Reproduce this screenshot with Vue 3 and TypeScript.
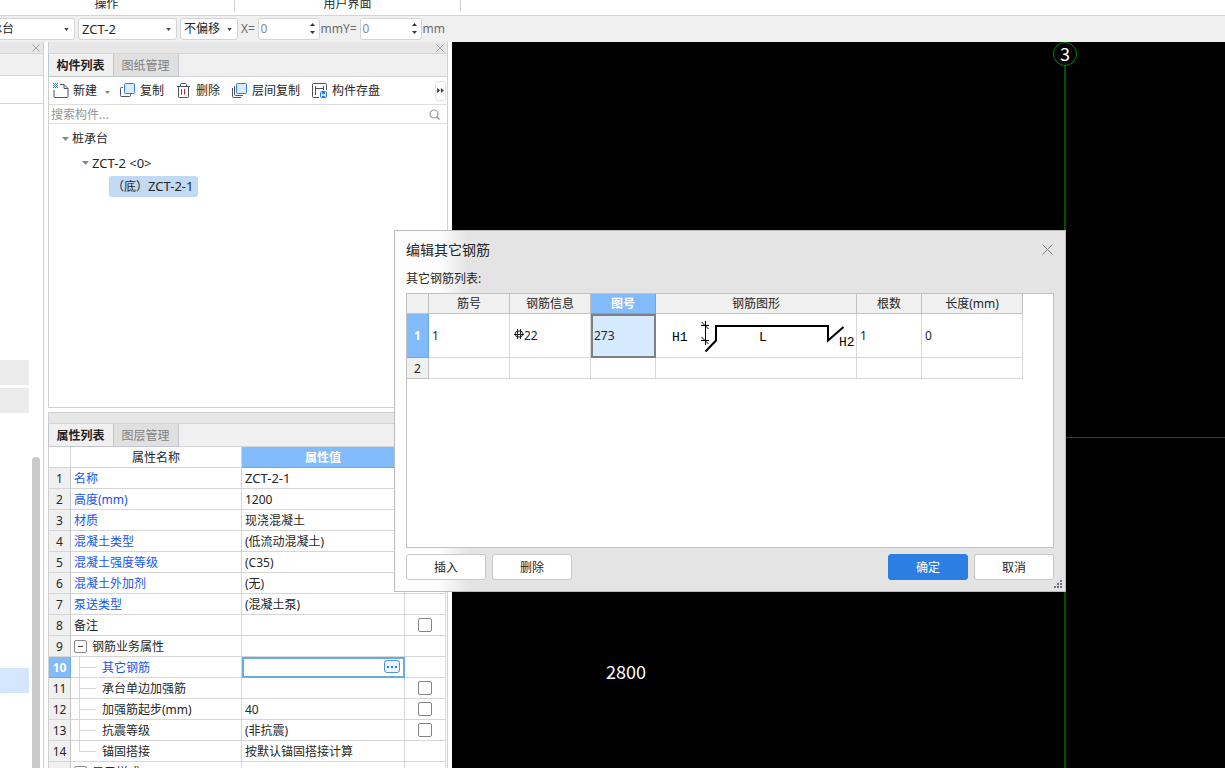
<script setup lang="ts">
import { ref } from 'vue'

interface Prop {
  name: string
  value?: string
  link?: boolean
  check?: boolean
  kind?: 'group' | 'child' | 'last'
  active?: boolean
  latin?: boolean
}

const props: Prop[] = [
  { name: '名称', value: 'ZCT-2-1', link: true, latin: true },
  { name: '高度(mm)', value: '1200', link: true },
  { name: '材质', value: '现浇混凝土', link: true },
  { name: '混凝土类型', value: '(低流动混凝土)', link: true },
  { name: '混凝土强度等级', value: '(C35)', link: true },
  { name: '混凝土外加剂', value: '(无)', link: true },
  { name: '泵送类型', value: '(混凝土泵)', link: true },
  { name: '备注', check: true },
  { name: '钢筋业务属性', kind: 'group' },
  { name: '其它钢筋', kind: 'child', link: true, active: true },
  { name: '承台单边加强筋', kind: 'child', check: true },
  { name: '加强筋起步(mm)', value: '40', kind: 'child', check: true },
  { name: '抗震等级', value: '(非抗震)', kind: 'child', check: true },
  { name: '锚固搭接', value: '按默认锚固搭接计算', kind: 'last' },
  { name: '显示样式', kind: 'group' },
]

const offsets = [{ axis: 'X' }, { axis: 'Y' }]
const headers = ['筋号', '钢筋信息', '图号', '钢筋图形', '根数', '长度(mm)']
const search = ref('')
</script>

<template>
  <div class="app">
    <header class="ribbon">
      <div class="group first">操作</div>
      <div class="group">用户界面</div>
    </header>

    <div class="options">
      <label class="combo kind">
        <select aria-label="构件类型"><option>桩承台</option></select>
        <svg class="caret" viewBox="0 0 6 4"><path d="M0 0h6L3 4z" /></svg>
      </label>
      <label class="combo name">
        <select aria-label="构件名称"><option>ZCT-2</option></select>
        <svg class="caret" viewBox="0 0 6 4"><path d="M0 0h6L3 4z" /></svg>
      </label>
      <label class="combo shift">
        <select aria-label="偏移方式"><option>不偏移</option></select>
        <svg class="caret" viewBox="0 0 6 4"><path d="M0 0h6L3 4z" /></svg>
      </label>
      <div v-for="o in offsets" :key="o.axis" class="offset">
        <label :for="'off' + o.axis">{{ o.axis }}=</label>
        <span class="spin">
          <input :id="'off' + o.axis" type="text" value="0" />
          <span class="steps">
            <button aria-label="增加"><svg viewBox="0 0 5 3"><path d="M0 3h5L2.5 0z" /></svg></button>
            <button aria-label="减少"><svg viewBox="0 0 5 3"><path d="M0 0h5L2.5 3z" /></svg></button>
          </span>
        </span>
        <span>mm</span>
      </div>
    </div>

    <main class="work">
      <aside class="nav">
        <div class="strip">
          <button class="close" aria-label="关闭"><svg viewBox="0 0 8 8"><path d="M.5.5l7 7M7.5.5l-7 7" /></svg></button>
        </div>
        <div class="nav-head"></div>
        <div class="nav-sub"></div>
        <div class="nav-body">
          <div class="nav-items">
            <div class="item"></div>
            <div class="item"></div>
            <div class="item current"></div>
          </div>
          <div class="thumb"></div>
        </div>
      </aside>

      <div class="docks">
        <section class="dock parts">
          <div class="strip">
            <button class="close" aria-label="关闭"><svg viewBox="0 0 8 8"><path d="M.5.5l7 7M7.5.5l-7 7" /></svg></button>
          </div>
          <div class="tabs">
            <button class="tab on">构件列表</button>
            <button class="tab">图纸管理</button>
          </div>
          <div class="tools">
            <button class="tool first-tool">
              <svg class="icon" viewBox="0 0 16 16">
                <path d="M7 1.500h4l4 4v8a1 1 0 0 1-1 1H2a1 1 0 0 1-1-1V7M11 1.500V5.500h4" class="dark" />
                <path d="M0 0h1v1h-1zM2 0h1v1h-1zM4 0h1v1h-1zM1 1h1v1h-1zM3 1h1v1h-1zM0 2h1v1h-1zM2 2h1v1h-1zM4 2h1v1h-1zM1 3h1v1h-1zM3 3h1v1h-1zM0 4h1v1h-1zM2 4h1v1h-1zM4 4h1v1h-1z" class="dots" />
              </svg>
              新建
              <svg class="mini" viewBox="0 0 5 3"><path d="M0 0h5L2.500 3z" /></svg>
            </button>
            <button class="tool">
              <svg class="icon" viewBox="0 0 16 16"><path d="M3 4.500H1.500a1 1 0 0 0-1 1v7a1 1 0 0 0 1 1h8a1 1 0 0 0 1-1V11" class="dark" /><rect x="4.500" y=".5" width="10" height="10" rx="1" class="blue fill" /></svg>
              复制
            </button>
            <button class="tool">
              <svg class="icon" viewBox="0 0 16 16"><path d="M1 3.500h13M4.500 3V1.500a1 1 0 0 1 1-1h4a1 1 0 0 1 1 1V3M2.500 4v9.500a1 1 0 0 0 1 1h8a1 1 0 0 0 1-1V4" class="dark" /><path d="M5.500 6v5.500M8.500 6v5.500" class="red" /></svg>
              删除
            </button>
            <button class="tool">
              <svg class="icon" viewBox="0 0 16 16"><path d="M.5 5v8.500a1 1 0 0 0 1 1H9M2.500 3v8.500a1 1 0 0 0 1 1H11" class="dark" /><rect x="4.500" y=".5" width="10" height="10" rx="1" class="blue fill" /></svg>
              层间复制
            </button>
            <button class="tool">
              <svg class="icon" viewBox="0 0 16 16"><path d="M7 14.500H1.500a1 1 0 0 1-1-1v-12a1 1 0 0 1 1-1h12a1 1 0 0 1 1 1V7M3.500 3v9M3.500 5.500h8M11.500 3v4" class="dark" /><rect x="8.500" y="8.500" width="6" height="6" rx="1" class="blue pale" /><path d="M10 9h3v2h-3zM10 13h3v2h-3z" class="dots" /></svg>
              构件存盘
            </button>
            <button class="more" aria-label="更多"><svg viewBox="0 0 8 6"><path d="M0 0l3.500 3L0 6zM4.500 0L8 3 4.500 6z" /></svg></button>
          </div>
          <div class="search">
            <input v-model="search" type="text" placeholder="搜索构件..." aria-label="搜索构件" />
            <svg viewBox="0 0 11 11"><circle cx="5" cy="5" r="4" /><path d="M7.500 7.500l3 3" /></svg>
          </div>
          <ul class="tree">
            <li class="l1"><svg viewBox="0 0 7 4"><path d="M0 0h7L3.500 4z" /></svg>桩承台</li>
            <li class="l2"><svg viewBox="0 0 7 4"><path d="M0 0h7L3.500 4z" /></svg><span class="latin">ZCT-2 &lt;0&gt;</span></li>
            <li class="l3"><span class="picked">（底）<span class="latin">ZCT-2-1</span></span></li>
          </ul>
        </section>

        <section class="dock attrs">
          <div class="strip"></div>
          <div class="tabs">
            <button class="tab on">属性列表</button>
            <button class="tab">图层管理</button>
          </div>
          <div class="sheet">
            <table class="props">
              <colgroup><col class="c-no" /><col class="c-name" /><col /><col class="c-add" /></colgroup>
              <thead>
                <tr><th></th><th>属性名称</th><th class="hot">属性值</th><th>附加</th></tr>
              </thead>
              <tbody>
                <tr v-for="(p, i) in props" :key="i">
                  <th :class="{ hot: p.active }">{{ i + 1 }}</th>
                  <td :class="{ link: p.link }">
                    <div class="cell">
                      <button v-if="p.kind === 'group'" class="fold" aria-label="折叠"></button>
                      <svg v-else-if="p.kind" class="branch" viewBox="0 0 28 20">
                        <path :d="p.kind === 'last' ? 'M5.5 0V10.5H22' : 'M5.5 0V20M5.5 10.5H22'" />
                      </svg>
                      <span>{{ p.name }}</span>
                    </div>
                  </td>
                  <td :class="{ editing: p.active, latin: p.latin }">
                    <div class="cell value">
                      <span>{{ p.value }}</span>
                      <button v-if="p.active" class="dots-btn" aria-label="编辑"><i></i><i></i><i></i></button>
                    </div>
                  </td>
                  <td class="center"><input v-if="p.check" type="checkbox" :aria-label="p.name" /></td>
                </tr>
              </tbody>
            </table>
          </div>
        </section>
      </div>

      <section class="drawing">
        <svg class="cad" width="100%" height="100%">
          <path d="M613 24V2000" class="axis" />
          <path d="M613 395.500H3000" class="axis thin" />
          <circle cx="613" cy="12" r="11.500" class="bubble" />
          <text x="613" y="19" text-anchor="middle">3</text>
          <text x="174" y="637" text-anchor="middle">2800</text>
        </svg>
      </section>
    </main>

    <div class="dialog" role="dialog" aria-labelledby="dlg-title">
      <div class="title">
        <h1 id="dlg-title">编辑其它钢筋</h1>
        <button aria-label="关闭"><svg viewBox="0 0 11 11"><path d="M.5.5l10 10M10.500.5l-10 10" /></svg></button>
      </div>
      <div class="caption">其它钢筋列表:</div>
      <div class="grid">
        <table>
          <colgroup>
            <col class="g0" /><col class="g1" /><col class="g1" /><col class="g3" /><col class="g4" /><col class="g3" /><col class="g6" />
          </colgroup>
          <thead>
            <tr><th></th><th v-for="h in headers" :key="h" :class="{ hot: h === '图号' }">{{ h }}</th></tr>
          </thead>
          <tbody>
            <tr class="tall">
              <th class="hot">1</th>
              <td>1</td>
              <td>
                <svg class="rebar" viewBox="0 0 10 11"><ellipse cx="5" cy="5" rx="4" ry="3" /><path d="M3.500 0v10M6.500 0v10M0 5.500h10" /></svg>22
              </td>
              <td class="chosen">273</td>
              <td class="shape">
                <svg viewBox="0 0 200 43">
                  <path d="M49.500 37.500L60 26.500V12H172V26.500L187.500 13" class="bar" />
                  <path d="M49.500 7V31M45 11.500h8M45 26.500h8M45.500 8l7 7M45.500 23l7 7" class="dim" />
                  <text x="16" y="27">H1</text>
                  <text x="103" y="27">L</text>
                  <text x="183" y="32">H2</text>
                </svg>
              </td>
              <td>1</td>
              <td>0</td>
            </tr>
            <tr class="short"><th>2</th><td v-for="h in headers" :key="h"></td></tr>
          </tbody>
        </table>
      </div>
      <div class="actions">
        <button>插入</button>
        <button>删除</button>
        <span class="spacer"></span>
        <button class="primary">确定</button>
        <button>取消</button>
      </div>
      <svg class="grip" viewBox="0 0 8 8"><path d="M6 0h2v2H6zM3 3h2v2H3zM6 3h2v2H6zM0 6h2v2H0zM3 6h2v2H3zM6 6h2v2H6z" /></svg>
    </div>
  </div>
</template>

<style>
body { margin: 0; overflow: hidden; }
</style>

<style scoped>
.app {
  position: relative;
  display: flex;
  flex-direction: column;
  height: 100vh;
  overflow: hidden;
  background: #fff;
  color: #262626;
  font: 12px/16px "Noto Sans", "Noto Sans CJK SC", sans-serif;
}
.app * { box-sizing: border-box; }
button, input, select { font: inherit; color: inherit; margin: 0; padding: 0; border: 0; background: none; outline: 0; }
svg { display: block; flex: none; }
.latin { font-size: 13px; }

.ribbon { display: flex; flex: none; height: 16px; border-bottom: 1px solid #d5d5d5; overflow: hidden; }
.group { width: 226px; height: 11px; border-right: 1px solid #d0d0d0; text-align: center; line-height: 8px; }
.group.first { width: 256px; margin-left: -21px; }

.options { display: flex; flex: none; align-items: center; height: 26px; background: #f0f0f0; color: #6b6b6b; }
.combo { position: relative; display: flex; align-items: center; height: 22px; margin-right: 3px; padding: 0 5px 0 3px; border: 1px solid #d4d4d4; border-radius: 3px; background: #fff; color: #262626; }
.combo select { appearance: none; flex: 1; min-width: 0; height: 20px; }
.kind { width: 101px; margin-left: -26px; }
.name { width: 99px; }
.name select { font-size: 13px; padding-bottom: 1px; }
.shift { width: 58px; }
.caret { width: 5px; height: 3px; fill: #444; }
.offset { display: flex; align-items: center; width: 102px; padding-bottom: 1px; }
.offset label { width: 17px; }
.spin { display: flex; width: 62px; height: 22px; margin-right: 1px; border: 1px solid #d4d4d4; border-radius: 3px; background: #fff; color: #8a8a8a; }
.spin input { flex: 1; min-width: 0; padding-left: 2px; }
.steps { display: flex; flex-direction: column; justify-content: space-around; width: 13px; padding: 2px 0; }
.steps button { display: flex; justify-content: center; padding: 2px 0; }
.steps svg { width: 5px; height: 3px; fill: #30364a; }

.work { display: flex; flex: 1; min-height: 0; }
.strip { display: flex; flex: none; justify-content: flex-end; align-items: center; height: 12px; padding-right: 3px; background: #e7e7e7; border-bottom: 1px solid #d5d5d5; }
.close svg { width: 8px; height: 8px; fill: none; stroke: #a0a0a0; }

.nav { display: flex; flex-direction: column; flex: none; width: 44px; border-right: 1px solid #d0d0d0; }
.nav-head { height: 22px; background: #f0f0f0; border-bottom: 1px solid #d5d5d5; }
.nav-sub { height: 28px; border-bottom: 1px solid #d5d5d5; }
.nav-body { display: flex; flex: 1; min-height: 0; gap: 3px; }
.nav-items { width: 29px; padding-top: 256px; }
.item { height: 25px; margin-bottom: 3px; background: #ececec; }
.item.current { margin-top: 255px; background: #d5e7ff; }
.thumb { width: 8px; margin-top: 353px; border-radius: 4px 4px 0 0; background: #c9c9c9; }

.docks { display: flex; flex-direction: column; flex: none; gap: 4px; width: 400px; margin: 0 4px; }
.dock { display: flex; flex-direction: column; border: 1px solid #d0d0d0; border-top: 0; }
.parts { flex: 0 0 366px; }
.attrs { flex: 1; min-height: 0; border-top: 1px solid #d0d0d0; border-bottom: 0; }
.attrs .strip { height: 11px; }
.tabs { display: flex; flex: none; height: 23px; margin-left: -1px; background: #f0f0f0; border-bottom: 1px solid #d5d5d5; }
.tab { width: 66px; height: 23px; padding: 1px 1px 0 0; border: 1px solid #c2c6cf; border-top: 0; background: #e0e0e0; color: #808080; }
.tab.on { background: #f0f0f0; color: #222; font-weight: 700; }
.tab + .tab { margin-left: -1px; }
.tools { display: flex; flex: none; align-items: center; gap: 12px; height: 28px; padding: 1px 1px 0 4px; border-bottom: 1px solid #dedede; }
.tool { display: flex; align-items: center; gap: 4px; white-space: nowrap; }
.first-tool { margin-right: -3px; }
.icon { width: 16px; height: 16px; fill: none; }
.dark { stroke: #4b5160; }
.blue { stroke: #2b7fe3; }
.fill { fill: #dceaff; }
.pale { fill: #cfe2fb; }
.dots { fill: #2b7fe3; stroke: none; }
.red { stroke: #e02020; }
.mini { width: 5px; height: 3px; margin: 2px 1px 0 4px; fill: #888; }
.more { display: flex; align-items: center; justify-content: center; width: 11px; height: 20px; margin: 0 0 1px auto; border: 1px solid #e2e2e2; border-radius: 3px; }
.more svg { width: 7px; height: 5px; fill: #30364a; }
.search { display: flex; flex: none; align-items: center; height: 19px; padding: 0 7px 0 2px; border-bottom: 1px solid #dedede; }
.search input { flex: 1; min-width: 0; height: 18px; }
.search input::placeholder { color: #959595; opacity: 1; }
.search svg { width: 11px; height: 11px; fill: none; stroke: #999; stroke-width: 1.2; }
.tree { margin: 0; padding: 3px 0 0; list-style: none; }
.tree li { display: flex; align-items: center; height: 24px; gap: 3px; }
.tree svg { width: 7px; height: 4px; fill: #888; }
.l1 { padding-left: 13px; }
.tree .l2 { padding: 0 0 1px 33px; }
.tree .l3 { padding: 0 0 2px 60px; }
.picked { height: 21px; padding: 0 4px 0 3px; border-radius: 3px; background: #c1d9f2; line-height: 20px; }

.sheet { flex: 1; min-height: 0; overflow: hidden; padding-right: 1px; }
table { border-collapse: separate; border-spacing: 0; table-layout: fixed; }
th, td { padding: 0; border: 0 solid #d6d6d6; border-width: 0 1px 1px 0; font-weight: 400; }
.props { width: 100%; }
.c-no { width: 22px; }
.c-name { width: 171px; }
.c-add { width: 41px; }
.props th, .props td { height: 21px; line-height: 20px; }
.props th { padding-top: 1px; line-height: 19px; }
.props tbody th { background: #f0f0f0; border-right-color: #c4c4c4; }
.props .hot, .grid .hot { background: #82bbfb; border-color: #69a8ea; color: #fff; font-weight: 700; }
.props tbody .hot { background: #82bbfb; }
.link { color: #1455fa; }
.cell { display: flex; align-items: center; height: 20px; padding-left: 3px; white-space: nowrap; overflow: hidden; }
.cell span { padding-top: 1px; }
.latin .cell span { padding-top: 0; }
.value { padding-right: 4px; }
.branch { width: 28px; height: 20px; fill: none; stroke: #d6d6d6; }
.fold { position: relative; width: 13px; height: 13px; margin-right: 5px; border: 1px solid #8a8a8a; border-radius: 2px; background: #fff; }
.fold::after { content: ""; display: block; width: 5px; height: 1px; margin: 0 auto; background: #444; }
.editing { outline: 2px solid #6caae6; outline-offset: -2px; }
.dots-btn { display: flex; align-items: center; justify-content: center; gap: 2px; width: 16px; height: 13px; margin: 0 0 1px auto; border: 1px solid #4b97e6; border-radius: 3px; background: #eef4fc; }
.dots-btn i { width: 2px; height: 2px; background: #2f7fe0; }
.center { text-align: center; }
input[type="checkbox"] { appearance: none; display: block; width: 14px; height: 14px; margin: 0 auto; border: 1px solid #858585; border-radius: 2px; background: #fff; }

.drawing { flex: 1; min-width: 0; background: #000; overflow: hidden; }
.axis { stroke: #005200; stroke-width: 2; }
.thin { stroke: #006a00; stroke-width: 1; }
.bubble { fill: none; stroke: #008c00; }
.cad text { fill: #fff; font: 18px "Noto Sans CJK SC", sans-serif; }

.dialog { position: absolute; left: 394px; right: 159px; top: 230px; padding: 0 11px 11px; border: 1px solid #bcbcbc; background: linear-gradient(90deg, #fdfdfd 44px, #e4e4e4 74px); }
.title { display: flex; align-items: center; justify-content: space-between; height: 38px; padding: 0 1px 1px 0; }
.title h1 { margin: 0; font-size: 14px; font-weight: 400; }
.title svg { width: 11px; height: 11px; fill: none; stroke: #808080; }
.caption { height: 24px; line-height: 20px; }
.grid { height: 255px; border: 1px solid #c2c2c2; background: #fff; }
.g0 { width: 22px; }
.g1 { width: 81px; }
.g3 { width: 65px; }
.g4 { width: 201px; }
.g6 { width: 101px; }
.grid table { width: 616px; }
.grid th { height: 20px; background: #f0f0f0; border-color: #c2c2c2; line-height: 19px; }
.grid thead th { padding-top: 1px; line-height: 18px; }
.grid td { padding-left: 3px; }
.tall td { height: 44px; }
.short td { height: 21px; }
.rebar { display: inline-block; width: 10px; height: 11px; margin-left: 1px; fill: none; stroke: #222; }
.grid .chosen { background: #d6eaff; outline: 2px solid #808080; outline-offset: -2px; }
.grid .shape { padding: 0; }
.shape svg { width: 200px; height: 43px; fill: none; stroke: #000; }
.bar { stroke-width: 2; }
.dim { stroke-width: 1; }
.shape text { fill: #000; stroke: none; font: 13px "Liberation Mono", monospace; }
.actions { display: flex; gap: 6px; margin-top: 6px; }
.actions button { width: 80px; height: 26px; padding-top: 1px; border: 1px solid #c8c8c8; border-radius: 3px; background: #fff; }
.actions .primary { border-color: #2b7fe3; background: #2b7fe3; color: #fff; }
.spacer { flex: 1; }
.grip { position: absolute; right: 3px; bottom: 3px; width: 8px; height: 8px; fill: #707482; }
</style>
